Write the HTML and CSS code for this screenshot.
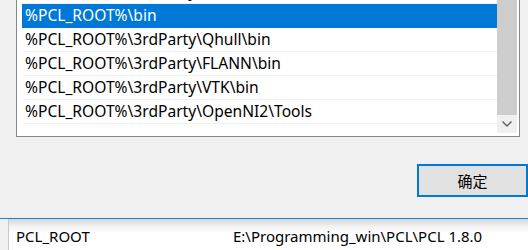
FILE: index.html
```html
<!DOCTYPE html>
<html lang="zh-CN">
<head>
    <meta charset="UTF-8">
    <title>编辑环境变量</title>
    <link rel="stylesheet" href="styles.css">
</head>
<body>
    <div class="dialog">
        <div class="listbox">
            <ul class="paths">
                <li>%PCL_ROOT%\3rdParty\Boost\lib</li>
                <li class="selected">%PCL_ROOT%\bin</li>
                <li>%PCL_ROOT%\3rdParty\Qhull\bin</li>
                <li>%PCL_ROOT%\3rdParty\FLANN\bin</li>
                <li>%PCL_ROOT%\3rdParty\VTK\bin</li>
                <li>%PCL_ROOT%\3rdParty\OpenNI2\Tools</li>
            </ul>
            <div class="scrollbar">
                <div class="thumb"></div>
                <div class="arrow">
                    <svg width="10" height="6" viewBox="0 0 10 6"><path d="M0.5 0.5 L5 5 L9.5 0.5" fill="none" stroke="#606060" stroke-width="1.4"/></svg>
                </div>
            </div>
        </div>
        <div class="actions">
            <button class="ok">确定</button>
        </div>
    </div>

    <div class="behind">
        <div class="gutter"></div>
        <div class="vars">
            <div class="var-row">
                <span class="var-name">PCL_ROOT</span>
                <span class="var-value">E:\Programming_win\PCL\PCL 1.8.0</span>
            </div>
        </div>
    </div>
</body>
</html>
```

FILE: styles.css
```css
body {
    margin: 0;
    width: 528px;
    height: 250px;
    overflow: hidden;
    background: #f0f0f0;
    font-family: "Noto Sans", "Noto Sans CJK SC", sans-serif;
    font-size: 15px;
    color: #000;
}
.dialog {
    display: flow-root;
    height: 218px;
    border-bottom: 1px solid #1883d7;
    background: #f0f0f0;
}
.listbox {
    display: flex;
    width: 495px;
    height: 156px;
    margin: -21px 0 0 16px;
    padding: 0 2px 0 5px;
    background: #fff;
    border: 1px solid #828790;
}
.paths {
    list-style: none;
    margin: 0;
    padding: 0;
    width: 475px;
    font-size: 15.6px;
}
.paths li {
    height: 23px;
    line-height: 23px;
    padding-left: 3px;
    border-bottom: 1px solid #f0f0f0;
    white-space: nowrap;
}
.paths li.selected {
    background: #0078d7;
    color: #fff;
    border-bottom-color: #0078d7;
}
.scrollbar {
    width: 20px;
    height: 153px;
    display: flex;
    flex-direction: column;
    background: #f0f0f0;
}
.thumb {
    flex: 1;
    background: #cdcdcd;
}
.arrow {
    height: 18px;
    display: flex;
    align-items: center;
    justify-content: center;
}
.actions {
    display: flex;
    justify-content: flex-end;
    padding-top: 27px;
}
.ok {
    width: 111px;
    height: 33px;
    background: #e1e1e1;
    border: 2px solid #0078d7;
    font-family: "Noto Sans CJK SC", sans-serif;
    font-size: 15px;
    color: #000;
    padding: 0;
}
.behind {
    display: flex;
    height: 31px;
}
.gutter {
    width: 8px;
    background: #f0f0f0;
    border-right: 1px solid #c8c8c8;
}
.vars {
    flex: 1;
    background: linear-gradient(#d6d6d6, #f4f4f4 8px, #fff 14px);
}
.var-row {
    display: flex;
    padding: 7px 0 0 7px;
    line-height: 20px;
}
.var-name {
    width: 217px;
}
```
